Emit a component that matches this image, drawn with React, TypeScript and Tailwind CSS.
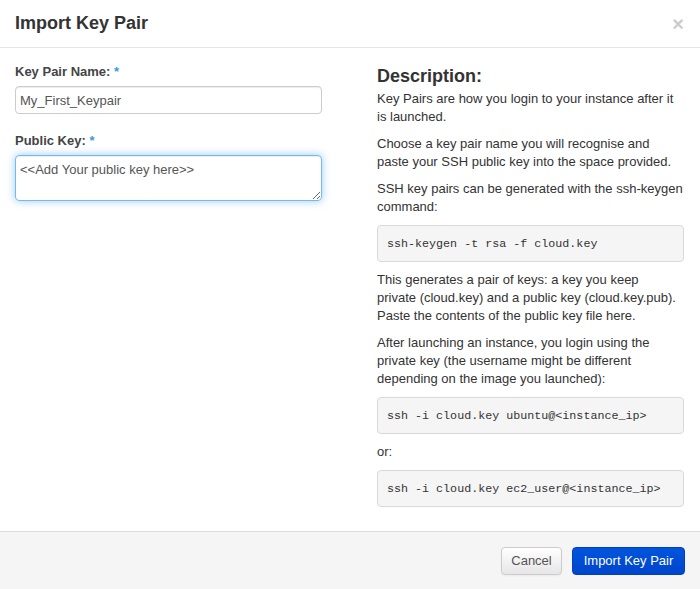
import React from "react";

const CodeBlock = ({ children }: { children: React.ReactNode }) => (
  <pre className="mb-[9px] rounded-[4px] border border-[#d9d9d9] bg-[#f5f5f5] px-[9px] py-[8.5px] font-['Liberation_Mono','Courier_New',monospace] text-[11.7px] leading-[18px] text-[#333] whitespace-pre">
    {children}
  </pre>
);

export default function App() {
  return (
    <div className="flex h-[589px] w-[700px] flex-col bg-white font-['Liberation_Sans',Arial,sans-serif] text-[13px] leading-[18px] text-[#333]">
      {/* Header */}
      <div className="flex h-[48px] items-center justify-between border-b border-[#e5e5e5] px-[15px]">
        <h3 className="text-[18px] font-bold leading-[27px] text-[#333]">Import Key Pair</h3>
        <button className="mr-[1px] text-[20px] font-bold leading-[18px] text-[#cccccc]">×</button>
      </div>

      {/* Body */}
      <div className="flex flex-1 gap-[55px] px-[15px] pt-[15px]">
        <div className="flex w-[307px] flex-col">
          <label className="mb-[5px] font-bold text-[#444]">
            Key Pair Name: <span className="text-[#3a9ad9]">*</span>
          </label>
          <input
            type="text"
            defaultValue="My_First_Keypair"
            className="h-[28px] w-full rounded-[4px] border border-[#ccc] px-[4px] text-[13px] text-[#555] shadow-[inset_0_1px_1px_rgba(0,0,0,0.075)] outline-none"
          />
          <label className="mb-[5px] mt-[18px] font-bold text-[#444]">
            Public Key: <span className="text-[#3a9ad9]">*</span>
          </label>
          <textarea
            defaultValue="<<Add Your public key here>>"
            className="h-[46px] w-full rounded-[4px] border border-[rgba(82,168,236,0.8)] px-[4px] pb-[4px] pt-[5px] text-[13px] leading-[18px] text-[#555] shadow-[inset_0_1px_1px_rgba(0,0,0,0.075),0_0_8px_rgba(82,168,236,0.6)] outline-none"
          />
        </div>

        <div className="flex w-[307px] flex-col">
          <h3 className="text-[18px] font-bold leading-[27px] text-[#333]">Description:</h3>
          <p className="mb-[9px]">Key Pairs are how you login to your instance after it is launched.</p>
          <p className="mb-[9px]">
            Choose a key pair name you will recognise and paste your SSH public key into the space provided.
          </p>
          <p className="mb-[9px]">SSH key pairs can be generated with the ssh-keygen command:</p>
          <CodeBlock>ssh-keygen -t rsa -f cloud.key</CodeBlock>
          <p className="mb-[9px]">
            This generates a pair of keys: a key you keep
            <br />
            private (cloud.key) and a public key (cloud.key.pub).
            <br />
            Paste the contents of the public key file here.
          </p>
          <p className="mb-[9px]">
            After launching an instance, you login using the private key (the username might be different depending on
            the image you launched):
          </p>
          <CodeBlock>{"ssh -i cloud.key ubuntu@<instance_ip>"}</CodeBlock>
          <p className="mb-[9px]">or:</p>
          <CodeBlock>{"ssh -i cloud.key ec2_user@<instance_ip>"}</CodeBlock>
        </div>
      </div>

      {/* Footer */}
      <div className="flex h-[58px] items-center justify-end gap-[10px] border-t border-[#dddddd] bg-[#f5f5f5] px-[15px]">
        <button className="flex h-[28px] w-[61px] items-center justify-center rounded-[4px] border border-[#cccccc] bg-gradient-to-b from-white to-[#e6e6e6] text-[13px] text-[#555] shadow-[inset_0_1px_0_rgba(255,255,255,0.2),0_1px_2px_rgba(0,0,0,0.05)]">
          Cancel
        </button>
        <button className="flex h-[28px] w-[113px] items-center justify-center rounded-[4px] border border-[#0040c0] bg-gradient-to-b from-[#0055dd] to-[#0044cc] text-[13px] text-white">
          Import Key Pair
        </button>
      </div>
    </div>
  );
}
